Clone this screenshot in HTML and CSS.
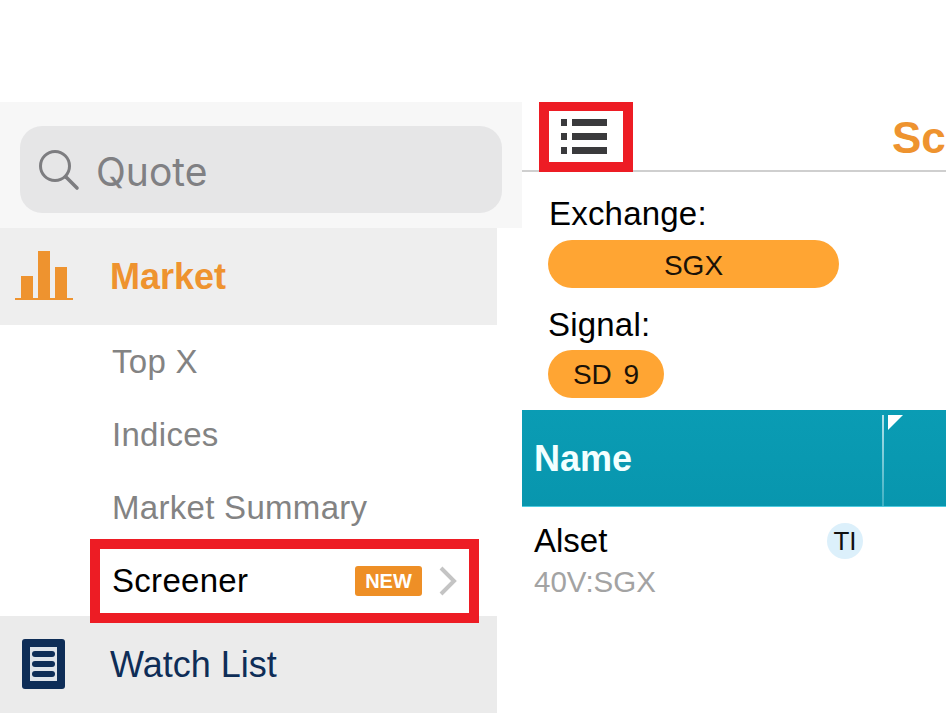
FILE: index.html
```html
<!DOCTYPE html>
<html lang="en">
<head>
    <meta charset="UTF-8">
    <meta name="viewport" content="width=device-width, initial-scale=1.0">
    <title>Screener</title>
    <link rel="stylesheet" href="styles.css">
</head>
<body>
    <div class="page">
        <aside class="sidebar">
            <div class="search-band">
                <div class="search-box">
                    <svg class="search-icon" width="42" height="42" viewBox="0 0 42 42">
                        <circle cx="16" cy="16" r="14.5" fill="none" stroke="#7d7d80" stroke-width="3"/>
                        <path d="M27 27 L38 38" stroke="#7d7d80" stroke-width="3.6" stroke-linecap="round"/>
                    </svg>
                    <span class="search-text">Quote</span>
                </div>
            </div>
            <nav class="menu">
                <div class="menu-head menu-head-active">
                    <svg class="menu-icon" width="58" height="50" viewBox="0 0 58 50">
                        <rect x="6" y="25" width="12" height="22" fill="#ee932f"/>
                        <rect x="23" y="0" width="12" height="47" fill="#ee932f"/>
                        <rect x="40" y="16" width="12" height="31" fill="#ee932f"/>
                        <rect x="0" y="47" width="58" height="2" fill="#ee932f"/>
                    </svg>
                    <span class="menu-title">Market</span>
                </div>
                <div class="menu-item">Top X</div>
                <div class="menu-item">Indices</div>
                <div class="menu-item">Market Summary</div>
                <div class="menu-item menu-item-current">
                    <span class="menu-item-label">Screener</span>
                    <span class="badge-new">NEW</span>
                    <svg class="chevron" width="18" height="30" viewBox="0 0 18 30">
                        <path d="M2 2 L15 15 L2 28" fill="none" stroke="#c4c4c4" stroke-width="4"/>
                    </svg>
                </div>
                <div class="menu-head">
                    <svg class="menu-icon watch-icon" width="43" height="50" viewBox="0 0 43 50">
                        <rect x="0" y="0" width="43" height="50" rx="3" fill="#0e2d57"/>
                        <rect x="8" y="8" width="27" height="34" fill="#dfe4ea"/>
                        <rect x="10" y="12" width="23" height="6" rx="3" fill="#0e2d57"/>
                        <rect x="10" y="22" width="23" height="6" rx="3" fill="#0e2d57"/>
                        <rect x="10" y="32" width="23" height="6" rx="3" fill="#0e2d57"/>
                    </svg>
                    <span class="menu-title menu-title-plain">Watch List</span>
                </div>
            </nav>
        </aside>

        <main class="content">
            <header class="topbar">
                <div class="list-button">
                    <svg width="46" height="36" viewBox="0 0 46 36">
                        <rect x="0" y="0" width="6" height="7" fill="#3a3a3c"/>
                        <rect x="11" y="0" width="35" height="7" fill="#3a3a3c"/>
                        <rect x="0" y="14" width="6" height="7" fill="#3a3a3c"/>
                        <rect x="11" y="14" width="35" height="7" fill="#3a3a3c"/>
                        <rect x="0" y="28" width="6" height="7" fill="#3a3a3c"/>
                        <rect x="11" y="28" width="35" height="7" fill="#3a3a3c"/>
                    </svg>
                </div>
                <h1 class="page-title">Screener</h1>
            </header>

            <section class="filters">
                <div class="filter-label">Exchange:</div>
                <div class="pill pill-wide">SGX</div>
                <div class="filter-label filter-label-second">Signal:</div>
                <div class="pill pill-small">SD 9</div>
            </section>

            <div class="table-head">
                <div class="col-name">Name</div>
                <div class="col-next"><span class="corner"></span></div>
            </div>

            <div class="table-row">
                <div class="stock">
                    <div class="stock-name">Alset</div>
                    <div class="stock-code">40V:SGX</div>
                </div>
                <div class="ti-badge">TI</div>
            </div>
        </main>
    </div>
</body>
</html>
```

FILE: styles.css
```css
/* General Styles */
html, body {
    margin: 0;
    padding: 0;
    height: 100%;
    overflow: hidden;
    background: #fff;
    font-family: "Liberation Sans", Arial, sans-serif;
}

.page {
    display: flex;
    padding-top: 102px;
}

/* Sidebar */
.sidebar {
    width: 522px;
    flex-shrink: 0;
}

.search-band {
    height: 126px;
    padding: 24px 20px 15px 20px;
    box-sizing: border-box;
    background: #f7f7f7;
}

.search-box {
    display: flex;
    align-items: center;
    height: 87px;
    padding-left: 19px;
    border-radius: 22px;
    background: #e6e6e7;
}

.search-icon {
    margin-top: 2px;
}

.search-text {
    margin-left: 15px;
    padding-top: 3px;
    font-family: "Inter", "Liberation Sans", sans-serif;
    font-size: 39px;
    color: #808083;
}

.menu {
    width: 497px;
}

.menu-head {
    display: flex;
    align-items: center;
    height: 97px;
    padding-left: 15px;
    box-sizing: border-box;
    background: #ebebeb;
}

.menu-head-active {
    background: #eeeeee;
}

.menu-icon {
    width: 58px;
    margin-top: -2px;
    flex-shrink: 0;
}

.watch-icon {
    width: 43px;
    margin-left: 7px;
    margin-right: 8px;
}

.menu-title {
    margin-left: 37px;
    font-size: 36px;
    font-weight: bold;
    color: #ee932f;
}

.menu-title-plain {
    font-weight: normal;
    color: #0e2d57;
}

.menu-item {
    display: flex;
    align-items: center;
    height: 73px;
    padding-left: 112px;
    box-sizing: border-box;
    font-size: 33px;
    letter-spacing: 0.3px;
    color: #838383;
}

.menu-item-current {
    position: relative;
    height: 72px;
    padding-top: 1px;
    color: #000;
}

/* red annotation frame */
.menu-item-current::after {
    content: '';
    position: absolute;
    left: 90px;
    top: -5px;
    width: 389px;
    height: 84px;
    box-sizing: border-box;
    border: 10px solid #ed1c24;
}

.menu-item-label {
    flex: 1;
}

.badge-new {
    width: 67px;
    height: 30px;
    line-height: 30px;
    text-align: center;
    border-radius: 3px;
    background: #ee8f26;
    color: #fff;
    font-size: 20px;
    font-weight: bold;
    letter-spacing: 0;
}

.chevron {
    margin-left: 17px;
    margin-right: 40px;
}

/* Main */
.content {
    flex: 1;
    min-width: 0;
    overflow: hidden;
}

.topbar {
    position: relative;
    display: flex;
    align-items: center;
    height: 70px;
    box-sizing: border-box;
    border-bottom: 2px solid #cfcfcf;
    white-space: nowrap;
}

.list-button {
    display: flex;
    flex-shrink: 0;
    align-items: center;
    justify-content: center;
    width: 94px;
    height: 71px;
    margin-left: 17px;
    margin-bottom: -1px;
    padding-top: 1px;
    padding-right: 4px;
    box-sizing: border-box;
    border: 10px solid #ed1c24;
    background: #fff;
    position: relative;
}

.page-title {
    margin: 3px 0 0 259px;
    flex-shrink: 0;
    font-size: 44px;
    font-weight: bold;
    color: #ee932f;
}

.filters {
    height: 238px;
    padding: 23px 0 0 26px;
    box-sizing: border-box;
}

.filter-label {
    margin-left: 1px;
    font-size: 33px;
    letter-spacing: 0.2px;
    line-height: 38px;
    color: #000;
}

.filter-label-second {
    margin-left: 0;
    margin-top: 18px;
}

.pill {
    height: 48px;
    line-height: 51px;
    margin-top: 7px;
    text-align: center;
    border-radius: 24px;
    background: #ffa533;
    color: #1a1208;
    font-size: 28px;
}

.pill-wide {
    width: 291px;
}

.pill-small {
    width: 116px;
    margin-top: 6px;
    line-height: 50px;
    word-spacing: 4px;
}

.table-head {
    display: flex;
    height: 97px;
    box-sizing: border-box;
    border-bottom: 1px solid #4ecbe0;
    background: linear-gradient(#0a9cb4, #0896ae);
}

.col-name {
    position: relative;
    width: 362px;
    padding-left: 12px;
    box-sizing: border-box;
    line-height: 98px;
    font-size: 36px;
    font-weight: bold;
    color: #f2ffff;
}

/* column divider fades out towards the bottom */
.col-name::after {
    content: '';
    position: absolute;
    right: 0;
    top: 5px;
    bottom: 0;
    width: 2px;
    background: linear-gradient(#b5e3ea, #3fb0c3);
}

.col-next {
    flex: 1;
    position: relative;
}

.corner {
    position: absolute;
    left: 4px;
    top: 5px;
    width: 0;
    height: 0;
    border-top: 15px solid #fff;
    border-right: 15px solid transparent;
}

.table-row {
    display: flex;
    padding: 16px 0 0 12px;
}

.stock {
    width: 293px;
}

.stock-name {
    font-size: 33px;
    line-height: 36px;
    color: #000;
}

.stock-code {
    margin-top: 6px;
    font-size: 29.5px;
    line-height: 34px;
    color: #a3a3a3;
}

.ti-badge {
    width: 36px;
    height: 36px;
    line-height: 36px;
    text-align: center;
    border-radius: 50%;
    background: #dcf0fb;
    color: #111;
    font-size: 26px;
}
```
